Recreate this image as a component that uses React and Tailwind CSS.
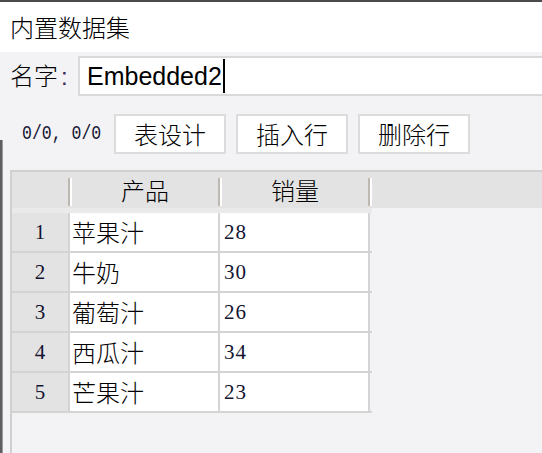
import React from "react";

const cjk = { fontFamily: "'Noto Sans CJK SC', 'Noto Sans', sans-serif" };
const mono = { fontFamily: "'Liberation Mono', 'DejaVu Sans Mono', monospace" };
const digits = { fontFamily: "'Liberation Serif', 'DejaVu Serif', serif" };

const rows = [
  { id: 1, name: "苹果汁", qty: 28 },
  { id: 2, name: "牛奶", qty: 30 },
  { id: 3, name: "葡萄汁", qty: 26 },
  { id: 4, name: "西瓜汁", qty: 34 },
  { id: 5, name: "芒果汁", qty: 23 },
];

function HeaderSep() {
  // beige groove with white highlight, like the old win32 header control
  return <div className="self-end mb-[2px] h-[28px] w-[4px] border-l-2 border-r-2 border-l-[#bdb9b0] border-r-white" />;
}

function ToolButton({ children }) {
  return (
    <div className="w-[112px] h-[40px] flex items-center justify-center bg-white border-2 border-[#dcdcdc] text-[24px] leading-none text-black">
      {children}
    </div>
  );
}

export default function App() {
  return (
    <div
      className="w-[542px] h-[453px] overflow-hidden flex flex-col bg-[#f3f3f5] border-t-2 border-[#4b4b4b] text-black font-light"
      style={cjk}
    >
      <div className="h-[50px] shrink-0 bg-white flex items-center pl-[10px] text-[24px] leading-none">
        内置数据集
      </div>

      <div className="flex-1 flex min-h-0">
        {/* edge of the window behind */}
        <div className="w-[3px] shrink-0 flex flex-col">
          <div className="h-[88px]" />
          <div className="flex-1 bg-[#5e5e5e] border-r border-[#9a9a9a]" />
        </div>

        <div className="flex-1 flex flex-col min-w-0">
          <div className="mt-[4px] h-[40px] shrink-0 flex items-center">
            <div className="w-[75px] pl-[7px] text-[24px] leading-none">
              名字<span className="ml-[3px] text-[#3a2a5a] font-normal" style={{ fontFamily: "'Liberation Sans', sans-serif" }}>:</span>
            </div>
            <div className="flex-1 h-[40px] -mr-[10px] bg-white border-2 border-[#d9d9d9] flex items-center pl-[7px]">
              <span className="text-[25px] leading-none font-normal" style={{ fontFamily: "'Liberation Sans', Arial, sans-serif" }}>
                Embedded2
              </span>
              <span className="ml-[1px] w-[2px] h-[34px] bg-black" />
            </div>
          </div>

          <div className="mt-[18px] h-[40px] shrink-0 flex items-center">
            <div className="w-[111px] pl-[19px] flex items-center">
              <span className="text-[16.5px] leading-none text-[#141432] font-normal scale-y-125" style={mono}>
                0/0, 0/0
              </span>
            </div>
            <div className="flex gap-[10px]">
              <ToolButton>表设计</ToolButton>
              <ToolButton>插入行</ToolButton>
              <ToolButton>删除行</ToolButton>
            </div>
          </div>

          <div className="mt-[16px] ml-[7px] flex-1 min-h-0 flex flex-col border-l-2 border-t-2 border-[#d0d0d0]">
            <div className="h-[36px] shrink-0 flex bg-[#e3e3e3] text-[24px] leading-none">
              <div className="w-[56px]" />
              <HeaderSep />
              <div className="w-[146px] flex items-center justify-center">产品</div>
              <HeaderSep />
              <div className="w-[146px] flex items-center justify-center">销量</div>
              <HeaderSep />
              <div className="flex-1" />
            </div>
            <div className="w-[360px] h-[5px] shrink-0 bg-[#eaeaea]" />

            {rows.map((r) => (
              <div key={r.id} className="w-[360px] h-[40px] shrink-0 flex border-b-2 border-[#d4d4d4]">
                <div
                  className="w-[58px] bg-[#e3e3e3] border-r-2 border-[#d4d4d4] flex items-center justify-center text-[21px] leading-none text-[#141432] font-normal"
                  style={digits}
                >
                  {r.id}
                </div>
                <div className="w-[150px] bg-white border-r-2 border-[#d4d4d4] flex items-center pl-[2px] text-[24px] leading-none">
                  {r.name}
                </div>
                <div
                  className="w-[150px] bg-white border-r-2 border-[#d4d4d4] flex items-center pl-[4px] text-[21px] leading-none text-[#141432] font-normal tracking-[1px]"
                  style={digits}
                >
                  {r.qty}
                </div>
              </div>
            ))}
          </div>
        </div>
      </div>
    </div>
  );
}
